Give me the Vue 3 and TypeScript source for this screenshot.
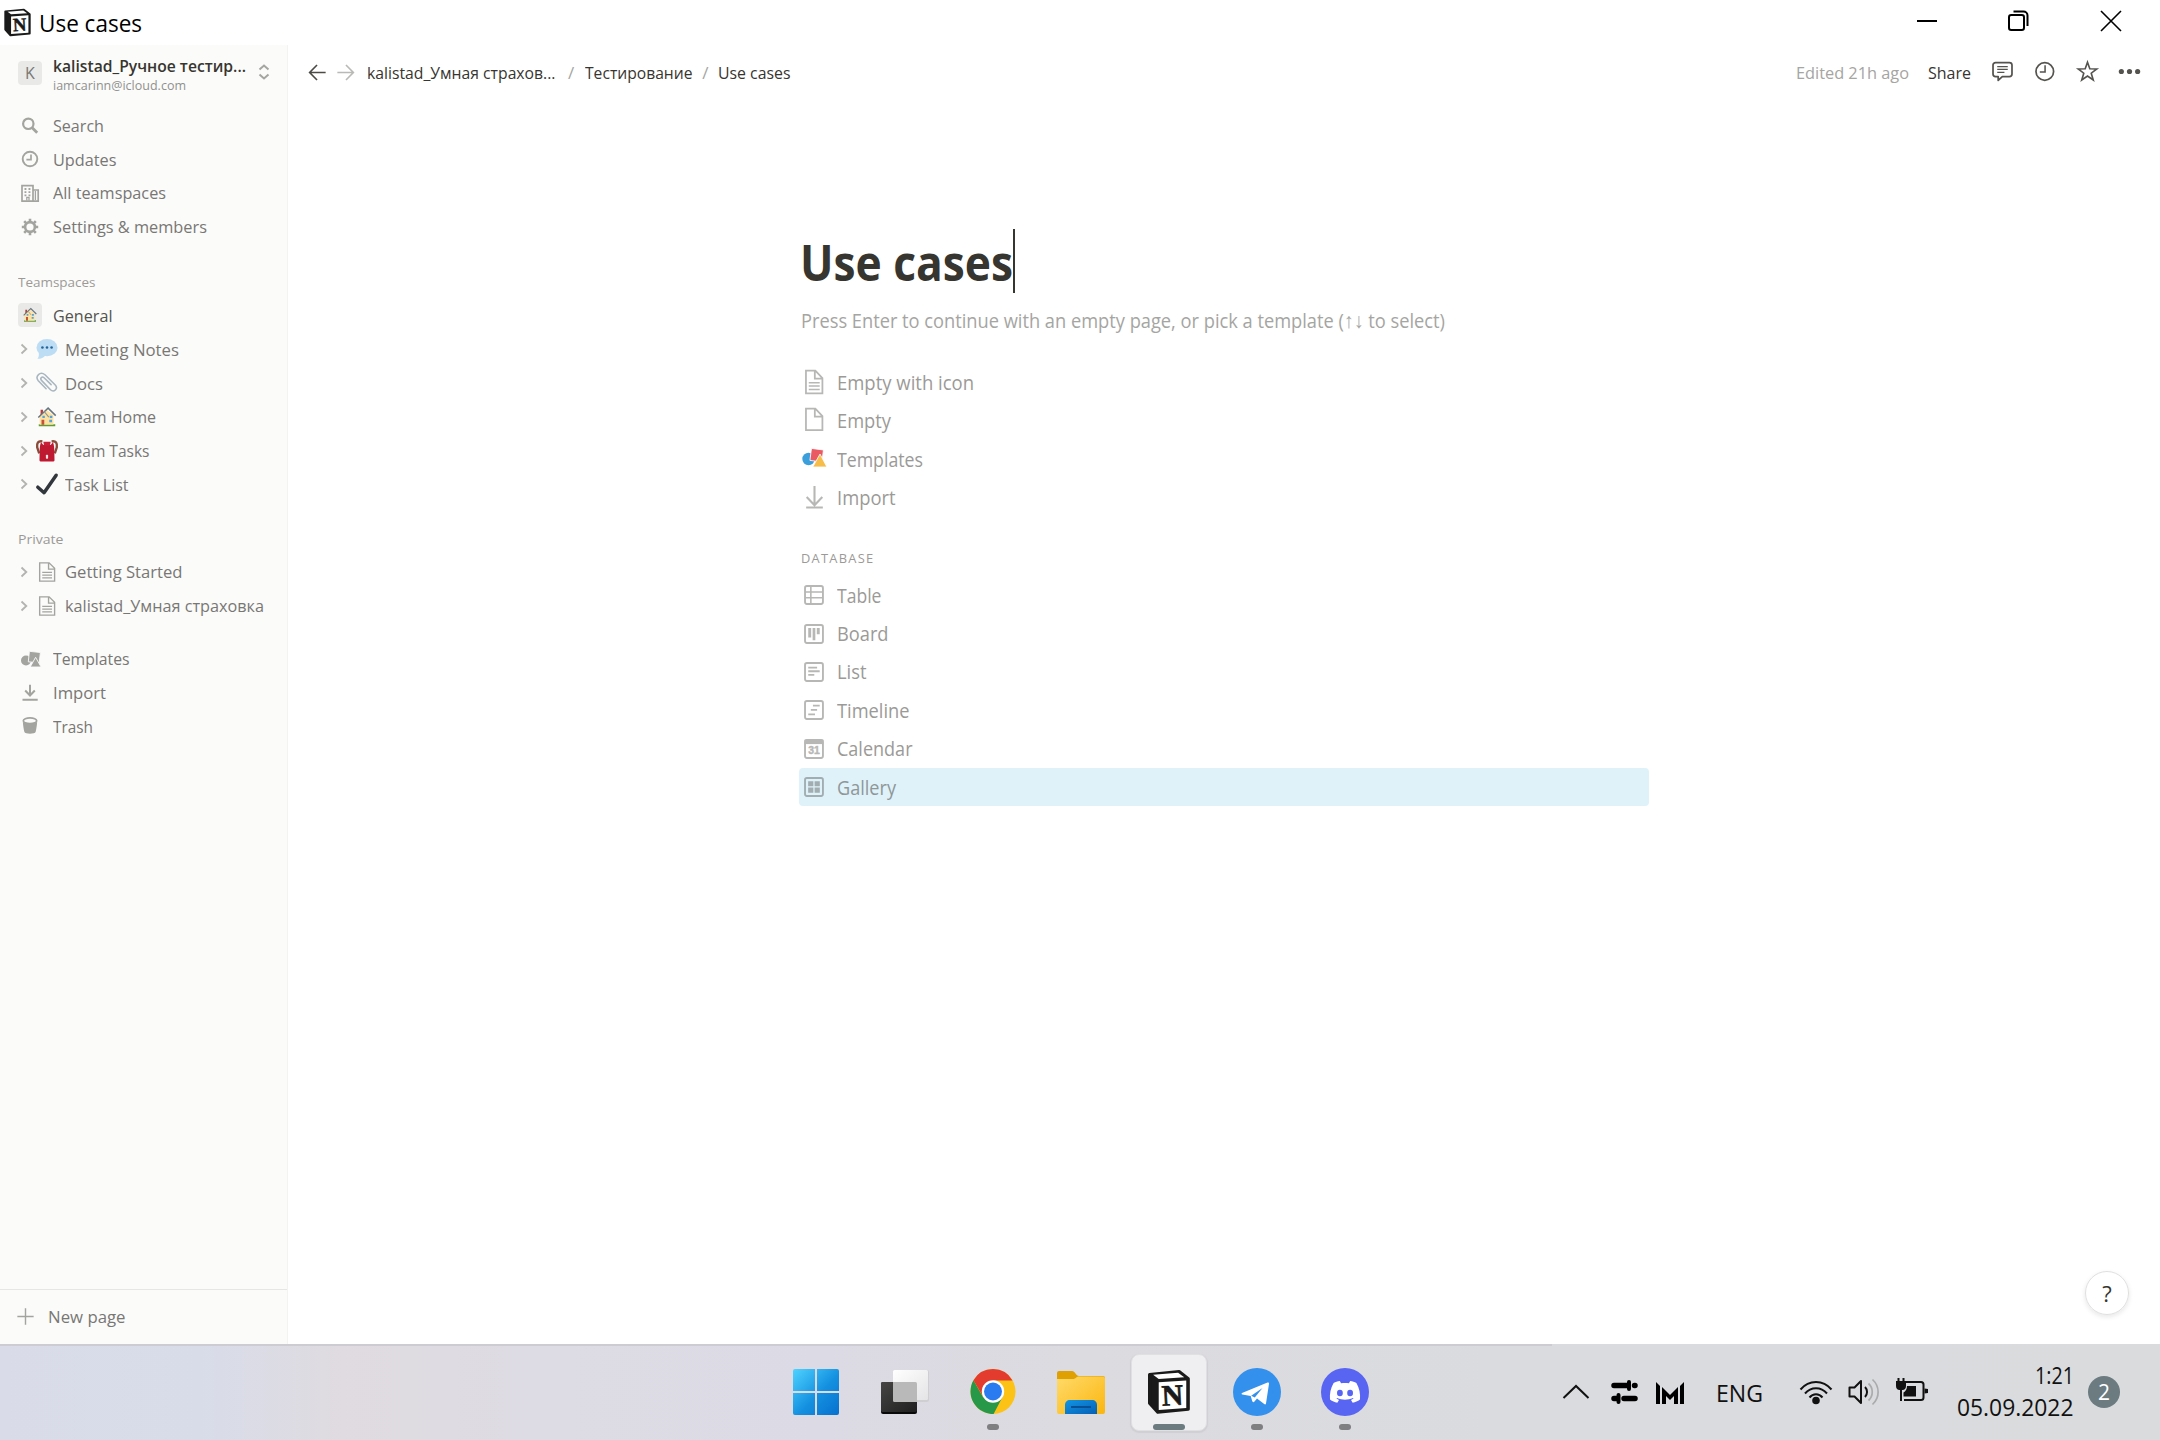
<script setup lang="ts">
interface Row { label: string; icon: string; width: number }

// Narrows the letterforms of a label so that it takes the given width in the line.
const vFit = {
  mounted(el: HTMLElement, binding: { value: number }) {
    const natural = el.getBoundingClientRect().width
    el.style.transform = `scaleX(${(binding.value / natural).toFixed(4)})`
    el.style.marginRight = `${(binding.value - natural).toFixed(2)}px`
  },
}

const notionCube = (w: number) => `
  <path d="M2 5 L31 2 L40 9 L40 39 L10 42 L2 33Z" fill="#1a1a1a" stroke="#1a1a1a" stroke-width="3" stroke-linejoin="round"/>
  <path d="M5.500 5.200 L30 3.300 L36 7.600 L11 9.300Z" fill="#fff"/>
  <path d="M11 12.500 L38 10.700 L38 37.800 L11 39.700Z" fill="#fff"/>
  <text x="24.500" y="35" text-anchor="middle" font-family="Liberation Serif, serif" font-weight="700" font-size="29" stroke="#1a1a1a" stroke-width="${w}" fill="#1a1a1a" transform="rotate(-3 24 26)">N</text>`

const house = `
  <path d="M3 21h18" stroke="#5c9e31" stroke-width="2.200"/>
  <path d="M4 11.500 10 6l2-1.500 7 5.500v10.500H4z" fill="#ffe1a0"/>
  <path d="M5 4h2.600v4L5 10z" fill="#b83a3a"/>
  <path d="M2.500 12.500 9 6.200 13.200 2.300 21.500 10.500" fill="none" stroke="#66757f" stroke-width="1.600"/>
  <path d="m9 6.200 5 6" stroke="#8b98a1" stroke-width="1.200"/>
  <path d="M6 15h3v5.500H6z" fill="#c5533c"/>
  <path d="M7 10.500h2.600v2.600H7zM15 10.500h2.800v2.600H15zM14.500 15h3v2.600h-3z" fill="#4fa3e0"/>`

const boxed = (inner: string) =>
  `<rect x="2.900" y="2.900" width="17.200" height="17.200" rx="1.800" fill="none" stroke="currentColor" stroke-width="1.800"/>${inner}`

const icons: Record<string, string> = {
  search: '<circle cx="10.300" cy="10.800" r="5.200" fill="none" stroke="currentColor" stroke-width="2.200"/><path d="m14.200 14.700 5 5" stroke="currentColor" stroke-width="2.800"/>',
  clock: '<circle cx="12" cy="12" r="7.300" fill="none" stroke="currentColor" stroke-width="1.900"/><path d="M13 7.500v5.200H8.400" fill="none" stroke="currentColor" stroke-width="1.700"/>',
  building: '<path d="M4 20V4.600h11V20M15 9h5.200v11.200H3.200" fill="none" stroke="currentColor" stroke-width="1.700"/><path d="M17.400 10v9M8.800 19.500v-3.200h2.200v3.200" stroke="currentColor" fill="none" stroke-width="1.300"/><path d="M6.500 7h1.900v1.900H6.500zM10.500 7h1.900v1.900h-1.900zM6.500 10.200h1.900v1.900H6.500zM10.500 10.200h1.900v1.900h-1.900zM6.500 13.400h1.900v1.900H6.500zM10.500 13.400h1.900v1.900h-1.900z" fill="currentColor"/>',
  gear: '<circle cx="12" cy="12" r="4.900" fill="none" stroke="currentColor" stroke-width="2.600"/><path d="M12 3.800v3M12 17.200v3M3.800 12h3M17.200 12h3M6.200 6.200l2.100 2.100M15.700 15.700l2.100 2.100M6.200 17.800l2.100-2.100M15.700 8.300l2.100-2.100" stroke="currentColor" stroke-width="2.600"/>',
  templates: '<circle cx="8" cy="13.500" r="5" fill="currentColor"/><path d="m11.400 4.300 11 1.200-1.200 10.400-10.900-1.100z" fill="currentColor" stroke="#fbfbfa" stroke-width=".9"/><path d="m17.600 10.300 5.500 9.700H12.200z" fill="currentColor" stroke="#fbfbfa" stroke-width=".9"/>',
  import: '<path d="M12 3.800v10.500M7.200 9.500l4.800 5 4.800-5M4.500 18.700h15.200" fill="none" stroke="currentColor" stroke-width="2"/>',
  trash: '<ellipse cx="12" cy="6.800" rx="6.700" ry="2.900" fill="none" stroke="currentColor" stroke-width="1.700"/><path d="M4.800 7.500c.3 4 .9 7.500 1.600 10.600.4 2.200 10.800 2.200 11.200 0 .7-3.100 1.300-6.600 1.600-10.600-2 3.200-12.400 3.200-14.400 0z" fill="currentColor"/>',
  speech: '<ellipse cx="12" cy="10.500" rx="11.500" ry="9.300" fill="#bdddf4"/><path d="M3 16c.5 3-.2 5-1.500 6.700 4 0 7-1.500 9-4z" fill="#bdddf4"/><g fill="#226699"><circle cx="7" cy="10.300" r="1.400"/><circle cx="12" cy="10.300" r="1.400"/><circle cx="17" cy="10.300" r="1.400"/></g>',
  clip: '<path d="M16.500 13.800 8.800 6.300c-2.200-2-4.900.6-2.800 2.800l9.800 10.300c3.600 3.400 8.800-1.200 5.200-5.200L9.800 3C4.500-1.200-1.400 4.600 2.500 9.500l8.500 8.700" fill="none" stroke="#a9b6c0" stroke-width="1.700" stroke-linecap="round"/>',
  house,
  pack: '<path d="M7 1.500C2 .8.800 3 1.300 8l2.200 6.500M17 1.500c5-.7 6.200 1.500 5.700 6.500l-2.200 6.500" fill="none" stroke="#8a4b38" stroke-width="2.600"/><path d="M5.500 2.500 8 5.500h8l2.500-3c1.200 2.500 1.400 6 1.500 10l.2 9.500c0 1-.8 1.500-2 1.500H5.800c-1.200 0-2-.5-2-1.500l.2-9.500c.1-4 .3-7.500 1.500-10z" fill="#be1931"/><path d="M8 1.800h8l-.8 4.200H8.800z" fill="#c9203a"/><rect x="10.800" y="16" width="2.400" height="4.500" rx=".8" fill="#f4e4e4"/>',
  check: '<path d="M2 15.500 8.800 21.500 22 2.500" fill="none" stroke="#31373d" stroke-width="3.800" stroke-linecap="round" stroke-linejoin="round"/>',
  page: '<path d="M4 2h10.300l6 6v14H4zM13.700 2v6.800h6.500" fill="none" stroke="currentColor" stroke-width="1.500"/><path d="M6.800 12.500h10.700M6.800 15.500h10.700M6.800 18.500h10.700" stroke="currentColor" stroke-width="1.400"/>',
  pageLines: '<path d="M3.800 1.500h9l6.800 7.300v14.500H3.800zM12.300 1.500v7.800h7" fill="none" stroke="currentColor" stroke-width="1.700"/><path d="M6.500 13.200h10.500M6.500 16.400h10.500M6.500 19.600h10.500" stroke="currentColor" stroke-width="1.500"/>',
  blank: '<path d="M3.800 1.500h9l6.800 7.300v13.500H3.800zM12.300 1.500v7.800h7" fill="none" stroke="currentColor" stroke-width="1.700"/>',
  shapes: '<circle cx="6.300" cy="12.500" r="6" fill="#3a9fdb"/><path d="m9.100 2.300 11.500 1.500-1.500 11.500-11.500-1.500z" fill="#ea5a63" stroke="#fff" stroke-width=".8"/><path d="m17.300 7.700 6.600 12.500H10.300z" fill="#f7bd4b" stroke="#fff" stroke-width=".8"/>',
  download: '<path d="M12 2v18M4.500 12.500l7.500 7.800 7.500-7.800M4 22.500h16" fill="none" stroke="currentColor" stroke-width="2"/>',
  table: boxed('<path d="M3 8.700h17M3 14.200h17M8.500 3v17" stroke="currentColor" stroke-width="1.500"/>'),
  board: boxed('<path d="M6 5.800h2.800v9H6zM10.200 5.800h2.600v11.700h-2.600zM14.200 5.800H17v6h-2.800z" fill="currentColor"/>'),
  list: boxed('<path d="M6 7.300h8.500M6 10.800h11M6 14.300h5.800" stroke="currentColor" stroke-width="1.700"/>'),
  timeline: boxed('<path d="M10.500 7.300H17M8.500 11.500h6M6 15.700h6.500" stroke="currentColor" stroke-width="1.700"/>'),
  calendar: boxed('<path d="M2.500 2.500h18v4.300h-18z" fill="currentColor"/><text x="11.500" y="16.500" text-anchor="middle" font-family="Liberation Sans, sans-serif" font-weight="700" font-size="10" stroke="currentColor" stroke-width=".4" fill="currentColor">31</text>'),
  gallery: boxed('<path d="M5.900 5.900h5v5h-5zM12.100 5.900h5v5h-5zM5.900 12.100h5v5h-5zM12.100 12.100h5v5h-5z" fill="currentColor"/>'),
  plus: '<path d="M12 3.500v17M3.500 12h17" stroke="currentColor" stroke-width="1.500"/>',
  back: '<path d="M20.500 12H4M11.500 4.200 3.800 12l7.700 7.800" fill="none" stroke="currentColor" stroke-width="1.700"/>',
  forward: '<path d="M3.500 12H20M12.500 4.200l7.700 7.800-7.700 7.800" fill="none" stroke="currentColor" stroke-width="1.700"/>',
  comment: '<path d="M4.800 2.700h14.400c1.700 0 2.700 1 2.700 2.600v9.400c0 1.600-1 2.600-2.700 2.600h-7.400l-4.300 4v-4H4.800c-1.700 0-2.700-1-2.700-2.600V5.300c0-1.600 1-2.600 2.700-2.600z" fill="none" stroke="currentColor" stroke-width="1.800" stroke-linejoin="round"/><path d="M6.500 6.800h11M6.500 9.800h11M6.500 12.800h7.500" stroke="currentColor" stroke-width="1.300"/>',
  history: '<circle cx="12.300" cy="12" r="9.200" fill="none" stroke="currentColor" stroke-width="1.800"/><path d="M12.600 5.500v7H7.100" fill="none" stroke="currentColor" stroke-width="1.600"/>',
  star: '<path d="m12 2.300 2.400 6.900 7.300.2-5.800 4.400 2.100 7-6-4.100-6 4.100 2.100-7-5.800-4.400 7.300-.2z" fill="none" stroke="currentColor" stroke-width="1.700"/>',
  dots: '<circle cx="3.500" cy="12" r="2.700" fill="currentColor"/><circle cx="12" cy="12" r="2.700" fill="currentColor"/><circle cx="20.500" cy="12" r="2.700" fill="currentColor"/>',
}

const menu: Row[] = [
  { label: 'Search', icon: 'search', width: 51 },
  { label: 'Updates', icon: 'clock', width: 63.500 },
  { label: 'All teamspaces', icon: 'building', width: 113 },
  { label: 'Settings & members', icon: 'gear', width: 154 },
]
const teamPages: Row[] = [
  { label: 'Meeting Notes', icon: 'speech', width: 114 },
  { label: 'Docs', icon: 'clip', width: 38 },
  { label: 'Team Home', icon: 'house', width: 91 },
  { label: 'Team Tasks', icon: 'pack', width: 84.500 },
  { label: 'Task List', icon: 'check', width: 63.500 },
]
const privatePages: Row[] = [
  { label: 'Getting Started', icon: 'page', width: 117.500 },
  { label: 'kalistad_Умная страховка', icon: 'page', width: 199 },
]
const tools: Row[] = [
  { label: 'Templates', icon: 'templates', width: 76.500 },
  { label: 'Import', icon: 'import', width: 53 },
  { label: 'Trash', icon: 'trash', width: 40 },
]
const starters: Row[] = [
  { label: 'Empty with icon', icon: 'pageLines', width: 137 },
  { label: 'Empty', icon: 'blank', width: 54 },
  { label: 'Templates', icon: 'shapes', width: 86 },
  { label: 'Import', icon: 'download', width: 58.500 },
]
const databases: Row[] = [
  { label: 'Table', icon: 'table', width: 44.500 },
  { label: 'Board', icon: 'board', width: 51.500 },
  { label: 'List', icon: 'list', width: 29.500 },
  { label: 'Timeline', icon: 'timeline', width: 72.500 },
  { label: 'Calendar', icon: 'calendar', width: 75.500 },
  { label: 'Gallery', icon: 'gallery', width: 59 },
]

const apps = [
  {
    name: 'start', state: '', art: `<defs><linearGradient id="win" gradientUnits="userSpaceOnUse" x1="0" y1="1" x2="46" y2="47"><stop stop-color="#4fd3ff"/><stop offset=".55" stop-color="#1490e0"/><stop offset="1" stop-color="#0670cf"/></linearGradient></defs>
      <path d="M2 1h20v22H0V3a2 2 0 0 1 2-2zM24 1h20a2 2 0 0 1 2 2v20H24zM0 25h22v22H2a2 2 0 0 1-2-2zM24 25h22v20a2 2 0 0 1-2 2H24z" fill="url(#win)"/>`,
  },
  {
    name: 'tasks', state: '', art: `<defs><linearGradient id="tv1" x1="0" y1="0" x2="1" y2="1"><stop stop-color="#474645"/><stop offset="1" stop-color="#1f1f1f"/></linearGradient><linearGradient id="tv2" x1="0" y1="0" x2="1" y2="1"><stop stop-color="#fff"/><stop offset="1" stop-color="#e4e4e6"/></linearGradient></defs>
      <rect x="0" y="14" width="36" height="32" rx="2" fill="#090909"/><rect x="0" y="14" width="36" height="30" rx="1.500" fill="url(#tv1)"/>
      <rect x="12" y="2" width="36" height="32" rx="2" fill="#cfcfd1"/><rect x="12" y="2" width="35" height="30" rx="1.500" fill="url(#tv2)"/><path d="M12 14h22.500a1.500 1.500 0 0 1 1.500 1.500V34H14a2 2 0 0 1-2-2z" fill="#b9b9b9"/>`,
  },
  {
    name: 'chrome', state: 'open', art: `<circle cx="24" cy="23.500" r="22.500" fill="#fcc216"/>
      <path d="M24 23.500 33.500 29 24.600 46C12 46 1.500 36 1.500 23.500c0-4 1-8 3-11.200L14 29z" fill="#279847"/>
      <path d="M24 12.500h19.500A22.500 22.500 0 0 0 4.500 12.300L14 28.500z" fill="#e33b2e"/><circle cx="24" cy="23.500" r="11.200" fill="#fff"/><circle cx="24" cy="23.500" r="9" fill="#2b7bf0"/>`,
  },
  {
    name: 'files', state: '', art: `<defs><linearGradient id="fold" x1="0" y1="0" x2="1" y2="1"><stop stop-color="#ffda6a"/><stop offset="1" stop-color="#fbb60f"/></linearGradient><linearGradient id="tray" x1="0" y1="0" x2="1" y2="1"><stop stop-color="#1295e5"/><stop offset="1" stop-color="#0560b5"/></linearGradient></defs>
      <path d="M0 5a2 2 0 0 1 2-2h13c3 0 4 5 7 5h24a2 2 0 0 1 2 2v10H0z" fill="#dfa004"/><path d="M0 11h16c3 0 3-2.500 6-2.500h24a2 2 0 0 1 2 2V44a2 2 0 0 1-2 2H2a2 2 0 0 1-2-2z" fill="url(#fold)"/>
      <path d="M8 46V37c0-3 2-5 5-5h22c3 0 5 2 5 5v9z" fill="url(#tray)"/><path d="M14 39h20" stroke="#084f93" stroke-width="2"/>`,
  },
  { name: 'notion', state: 'active', art: `<g transform="translate(2.500 1.500) scale(1.020)">${notionCube(0.7)}</g>` },
  { name: 'telegram', state: 'open', art: '<circle cx="24" cy="24" r="24" fill="#3390ec"/><path d="M9 25 34.500 14.500c1-.4 1.700.2 1.500 1.300L33 35.500c-.2 1-1 1.200-1.800.6L24 30.500l-2.500 3c-1 1-2 .8-2.300-.5l-1.500-5L9.200 26.600c-.8-.3-.8-1.200-.2-1.600z" fill="#fff"/><path d="M18.200 27.800 29.500 20 21.800 29.500" fill="#3390ec"/>' },
  { name: 'discord', state: 'open', art: '<circle cx="24" cy="24" r="24" fill="#5865f2"/><path d="M18.800 13c-2.400.4-4.300 1-6.200 2C9.600 20 8.500 26 9 31.500c2.300 1.700 4.600 2.700 7.300 3.300l1.700-2.900-2.600-1.300.7-.5c5 2.200 10.800 2.200 15.800 0l.7.500-2.600 1.300 1.700 2.900c2.700-.6 5-1.600 7.300-3.300.5-5.500-.6-11.500-3.600-16.500-1.900-1-3.800-1.600-6.200-2l-1.300 2.200c-2.600-.3-5.200-.3-7.800 0z" fill="#fff"/><ellipse cx="18.900" cy="25" rx="2.900" ry="3.200" fill="#5865f2"/><ellipse cx="29.100" cy="25" rx="2.900" ry="3.200" fill="#5865f2"/>' },
]
</script>

<template>
  <div class="screen">
    <header class="titlebar">
      <svg class="title-logo" viewBox="0 0 42 44" v-html="notionCube(0.7)" />
      <span v-fit="103" class="title-text">Use cases</span>
      <div class="window-buttons">
        <svg viewBox="0 0 24 24"><path d="M2 12h20" stroke="#000" stroke-width="2" /></svg>
        <svg viewBox="0 0 24 24"><rect x="2" y="6" width="15" height="15" rx="2.200" /><path d="M6.500 2.500h10a4 4 0 0 1 4 4v10.500" /></svg>
        <svg viewBox="0 0 24 24"><path d="m2 2 20 20M22 2 2 22" stroke-width="1.600" /></svg>
      </div>
    </header>

    <div class="workspace">
      <aside class="sidebar">
        <div class="account">
          <span class="avatar">K</span>
          <div class="account-text">
            <span v-fit="193" class="account-name">kalistad_Ручное тестир...</span>
            <span v-fit="133" class="account-mail">iamcarinn@icloud.com</span>
          </div>
          <svg class="switcher" viewBox="0 0 12 16"><path d="M1.500 5.500 6 1.500l4.500 4M1.500 10.500l4.500 4 4.500-4" /></svg>
        </div>
        <div v-for="row in menu" :key="row.label" class="row">
          <svg class="icon" viewBox="0 0 24 24" v-html="icons[row.icon]" />
          <span v-fit="row.width">{{ row.label }}</span>
        </div>

        <div class="section first"><span v-fit="77.500">Teamspaces</span></div>
        <div class="row general">
          <span class="avatar"><svg viewBox="0 0 24 24" v-html="house" /></span>
          <span v-fit="59.500">General</span>
        </div>
        <div v-for="row in teamPages" :key="row.label" class="row page-row">
          <svg class="chevron" viewBox="0 0 12 12"><path d="M3.500 1.500 8.300 6l-4.800 4.500" /></svg>
          <svg class="emoji" viewBox="0 0 24 24" v-html="icons[row.icon]" />
          <span v-fit="row.width">{{ row.label }}</span>
        </div>

        <div class="section second"><span v-fit="45.500">Private</span></div>
        <div v-for="row in privatePages" :key="row.label" class="row page-row">
          <svg class="chevron" viewBox="0 0 12 12"><path d="M3.500 1.500 8.300 6l-4.800 4.500" /></svg>
          <svg class="emoji" viewBox="0 0 24 24" v-html="icons[row.icon]" />
          <span v-fit="row.width">{{ row.label }}</span>
        </div>

        <div class="tools">
          <div v-for="row in tools" :key="row.label" class="row">
            <svg class="icon" viewBox="0 0 24 24" v-html="icons[row.icon]" />
            <span v-fit="row.width">{{ row.label }}</span>
          </div>
        </div>

        <div class="new-page">
          <svg viewBox="0 0 24 24" v-html="icons.plus" />
          <span v-fit="77.500">New page</span>
        </div>
      </aside>

      <main class="main">
        <nav class="topbar">
          <svg class="nav-arrow" viewBox="0 0 24 24" v-html="icons.back" />
          <svg class="nav-arrow dim" viewBox="0 0 24 24" v-html="icons.forward" />
          <span v-fit="188.500" class="crumb first-crumb">kalistad_Умная страхов...</span>
          <span class="slash wide">/</span>
          <span v-fit="107.500" class="crumb">Тестирование</span>
          <span class="slash">/</span>
          <span v-fit="72.500" class="crumb">Use cases</span>
          <div class="actions">
            <span v-fit="113" class="edited">Edited 21h ago</span>
            <span v-fit="43" class="share">Share</span>
            <svg viewBox="0 0 24 24" v-html="icons.comment" />
            <svg viewBox="0 0 24 24" v-html="icons.history" />
            <svg viewBox="0 0 24 24" v-html="icons.star" />
            <svg viewBox="0 0 24 24" v-html="icons.dots" />
          </div>
        </nav>

        <article class="doc">
          <h1><span v-fit="213">Use cases</span><i class="caret" /></h1>
          <p class="hint"><span v-fit="644">Press Enter to continue with an empty page, or pick a template (<span class="arrows">↑↓</span> to select)</span></p>
          <div v-for="row in starters" :key="row.label" class="option starter">
            <svg viewBox="0 0 24 24" v-html="icons[row.icon]" />
            <span v-fit="row.width">{{ row.label }}</span>
          </div>
          <div class="group"><span v-fit="73.500">DATABASE</span></div>
          <div v-for="row in databases" :key="row.label" class="option" :class="{ selected: row.label === 'Gallery' }">
            <svg viewBox="0 0 24 24" v-html="icons[row.icon]" />
            <span v-fit="row.width">{{ row.label }}</span>
          </div>
        </article>
        <div class="help">?</div>
      </main>
    </div>

    <footer class="taskbar">
      <div class="topline" />
      <div class="apps">
        <div v-for="app in apps" :key="app.name" class="app" :class="app.state">
          <svg viewBox="0 0 48 48" v-html="app.art" />
          <i class="pill" />
        </div>
      </div>
      <div class="tray">
        <svg class="up" viewBox="0 0 28 16"><path d="M1.500 14 14 2l12.500 12" /></svg>
        <svg class="sliders" viewBox="0 0 28 26">
          <path d="M4 6.500h13M24.500 6.500h.5M4 19.500h2M14 19.500h11" stroke="#000" stroke-width="5.500" stroke-linecap="round" />
          <path d="M19 3v7M8.500 16v7" stroke="#000" stroke-width="4" stroke-linecap="round" />
        </svg>
        <svg class="bars" viewBox="0 0 28 22"><path d="M0 0l4 4v18H0zM28 0l-4 4v18h4zM6 5l8 8 8-8v17h-4V14l-4 4-4-4v8H6z" fill="#000" /></svg>
        <span v-fit="47" class="lang">ENG</span>
        <svg class="wifi" viewBox="0 0 34 26">
          <path d="M1.500 10.500c8.500-10 22.500-10 31 0M6 14.500c6-7 16-7 22 0M10.500 18.500c3.500-4.200 9.500-4.200 13 0" />
          <circle cx="17" cy="21.500" r="2.800" fill="#111" />
        </svg>
        <svg class="volume" viewBox="0 0 32 28">
          <path d="M1.500 9.500h5L13 3v22l-6.500-6.500h-5z" stroke="#111" stroke-width="2" stroke-linejoin="round" />
          <path d="M17 9c2.700 2.700 2.700 7.300 0 10" stroke="#111" stroke-width="2" />
          <path d="M20.500 5.500c5 4.500 5 12.500 0 17M24.500 1.500c7.500 7 7.500 18 0 25" stroke="#aaabad" stroke-width="1.700" />
        </svg>
        <svg class="battery" viewBox="0 0 34 26">
          <path d="M10 5h16c1.700 0 2.500.8 2.500 2.500v13c0 1.700-.8 2.500-2.500 2.500H9" fill="none" stroke="#111" stroke-width="2" />
          <path d="M12 9h9v10.500H8.500V15.500c2-1 3.500-3.500 3.500-6.500zM29.500 11.500l3.500.5v4l-3.500.5zM1 4h10v5c0 2.500-1.500 4-3.500 4h-3C2.500 13 1 11.500 1 9z" fill="#111" />
          <path d="M3.500 1v4M8.500 1v4M6 12v12" stroke="#111" stroke-width="2" />
        </svg>
        <div class="datetime">
          <span v-fit="39">1:21</span>
          <span v-fit="116.500">05.09.2022</span>
        </div>
        <span class="badge">2</span>
      </div>
    </footer>
  </div>
</template>

<style>
body { margin: 0; background: #fff; }
</style>

<style scoped>
.screen {
  width: 2160px; height: 1440px; display: flex; flex-direction: column; overflow: hidden;
  font-family: "Open Sans", "Noto Sans", sans-serif; color: #37352f; background: #fff;
}
span { display: inline-block; flex: none; white-space: nowrap; transform-origin: 0 50%; }
svg { display: block; flex: none; overflow: visible; }

.titlebar { height: 45px; flex: none; display: flex; align-items: center; }
.title-logo { width: 27px; height: 29px; margin: 0 0 1px 4px; }
.title-text { margin-left: 7.500px; font-size: 23.500px; line-height: 45px; color: #000; padding-top: 1px; }
.window-buttons { margin-left: auto; display: flex; gap: 68px; padding-right: 37px; margin-bottom: 3px; }
.window-buttons svg { width: 24px; height: 24px; fill: none; stroke: #000; stroke-width: 2; }
.workspace { height: 1299px; flex: none; display: flex; }

.sidebar {
  width: 288px; box-sizing: border-box; flex: none; display: flex; flex-direction: column;
  background: #fbfbfa; border-right: 1px solid #f3f3f1; font-size: 17px; font-weight: 500; color: #787774;
}
.account { height: 63.500px; display: flex; align-items: flex-start; padding-left: 18px; }
.avatar {
  width: 24px; height: 24px; border-radius: 4px; background: #e9e9e7; flex: none;
  display: flex; align-items: center; justify-content: center; font-size: 16px; font-weight: 400; color: #787774;
}
.account .avatar { margin-top: 16px; }
.avatar svg { width: 16px; height: 16px; }
.account-text { margin-left: 10.500px; width: 200px; display: flex; flex-direction: column; align-items: flex-start; padding-top: 10px; }
.account-name { font-size: 17px; font-weight: 600; color: #37352f; line-height: 22px; }
.account-mail { font-size: 13.500px; font-weight: 400; color: #91918e; line-height: 17px; }
.switcher { width: 12px; height: 16px; margin: 19px 0 0 5.500px; fill: none; stroke: #a5a5a2; stroke-width: 2; }
.row { height: 33.750px; flex: none; display: flex; align-items: center; gap: 10.500px; padding-left: 18px; }
.icon { width: 24px; height: 24px; color: #a3a39f; }
.section { line-height: 31px; height: 31px; padding-left: 18px; font-size: 13.500px; color: #9b9a97; }
.first { padding-top: 23.500px; }
.second { padding-top: 22.750px; }
.general { height: 34.500px; color: #55534e; }
.page-row { gap: 0; }
.chevron { width: 12px; height: 12px; fill: none; stroke: #b3b3b0; stroke-width: 1.800; margin-right: 6px; }
.emoji { width: 22px; height: 22px; color: #a3a39f; margin-right: 6.500px; }
.tools { padding-top: 19.500px; }
.new-page { margin-top: auto; height: 55px; box-sizing: border-box; border-top: 1px solid #e6e6e4; display: flex; align-items: center; padding: 0 0 1px 14px; }
.new-page svg { width: 23px; height: 23px; color: #a3a39f; margin-right: 10.500px; }

.main { flex: 1; display: flex; flex-direction: column; }
.topbar { height: 54px; flex: none; display: flex; align-items: center; padding-left: 17.500px; font-size: 17px; }
.nav-arrow { width: 23px; height: 23px; color: #4c4a45; }
.dim { color: #b9b9b7; margin-left: 5px; }
.first-crumb { margin-left: 10px; }
.slash { width: 25.500px; text-align: center; color: #a5a5a2; }
.slash.wide { width: 30px; box-sizing: border-box; padding-left: 2px; }
.actions { margin-left: auto; padding-right: 19px; display: flex; align-items: center; gap: 19.500px; }
.edited { color: #a5a5a2; }
.share { padding: 0; }
.actions svg { width: 23px; height: 23px; color: #55534e; margin-bottom: 2px; }

.doc { width: 850px; margin-left: 511px; padding-top: 130px; }
h1 { margin: 0; height: 64px; padding-left: 1px; font-size: 49.500px; line-height: 67px; font-weight: 700; display: flex; }
.caret { width: 2px; height: 64px; background: #37352f; }
.hint { margin: 0 0 26.400px; height: 32px; padding: 12px 0 0 2px; font-size: 19.400px; line-height: 32px; color: #a5a5a2; }
.arrows { font-family: "Liberation Sans", sans-serif; font-size: 21px; }
.option { height: 38.400px; display: flex; align-items: center; padding-left: 2.500px; border-radius: 4px; font-size: 19.400px; color: #9b9a97; }
.option svg { width: 25px; height: 25px; margin: 1px 10px 0 0; color: #b7b7b5; }
.starter svg { margin: 0 10px 2px 0; }
.option.selected { background: #dff2fa; color: #8f9798; }
.option.selected svg { color: #a1adb0; }
.group { height: 26px; padding: 28.500px 0 4.500px 2px; font-size: 13px; font-weight: 500; line-height: 26px; letter-spacing: 1.300px; color: #9b9a97; }
.help {
  width: 44px; height: 44px; box-sizing: border-box; margin: auto 31px 29px auto; border-radius: 50%;
  border: 1px solid #e0e0df; box-shadow: 0 2px 5px rgba(15, 15, 15, .1); text-align: center; font-size: 22px; line-height: 42px;
}

.taskbar {
  position: relative; height: 96px; flex: none; display: flex; justify-content: flex-end;
  background: linear-gradient(90deg, #d9dce8 0, #d8dce9 200px, #dfdbe0 340px, #dddbe4 560px, #dcdae4 820px, #dbdbe0 1080px, #dadbdf 1500px, #dadbdd 2160px);
}
.topline { position: absolute; left: 0; top: 0; width: 1552px; height: 2px; background: #cdccd3; }
.apps { position: absolute; left: 773px; top: 0; display: flex; }
.app { width: 88px; height: 96px; display: flex; align-items: center; justify-content: center; position: relative; }
.app svg { width: 48px; height: 48px; position: relative; }
.active::before {
  content: ""; position: absolute; left: 6px; top: 10px; width: 76px; height: 77px; box-sizing: border-box;
  border-radius: 8px; background: #efeff1; border: 1px solid #e0e0e3; box-shadow: 0 1px 1px 1px #cfcfd4;
}
.pill { display: none; position: absolute; left: 38px; top: 80px; width: 12px; height: 6px; border-radius: 3px; background: #7f7f81; }
.open .pill { display: block; }
.active .pill { display: block; left: 28px; width: 32px; background: #6c7b80; }

.tray { display: flex; align-items: center; padding-right: 40px; color: #111; }
.up { width: 28px; height: 16px; fill: none; stroke: #111; stroke-width: 2; margin: 0 20px 1px 0; }
.sliders { width: 28px; height: 26px; margin: 0 18px 1px 0; }
.bars { width: 28px; height: 22px; margin: 1px 32px 0 0; }
.lang { font-size: 23.500px; padding-top: 1px; }
.wifi { width: 34px; height: 26px; fill: none; stroke: #111; stroke-width: 2; margin: 0 15px 1px 36px; }
.volume { width: 32px; height: 28px; fill: none; margin: 0 15px 1px 0; }
.battery { width: 34px; height: 26px; margin: 0 28.500px 4px 0; }
.datetime { display: flex; flex-direction: column; align-items: flex-end; font-size: 23.500px; line-height: 32px; margin-right: 14px; padding-bottom: 3px; }
.badge { width: 32px; height: 32px; border-radius: 50%; background: #6c7b80; color: #fff; font-size: 21px; line-height: 32px; text-align: center; }
</style>
